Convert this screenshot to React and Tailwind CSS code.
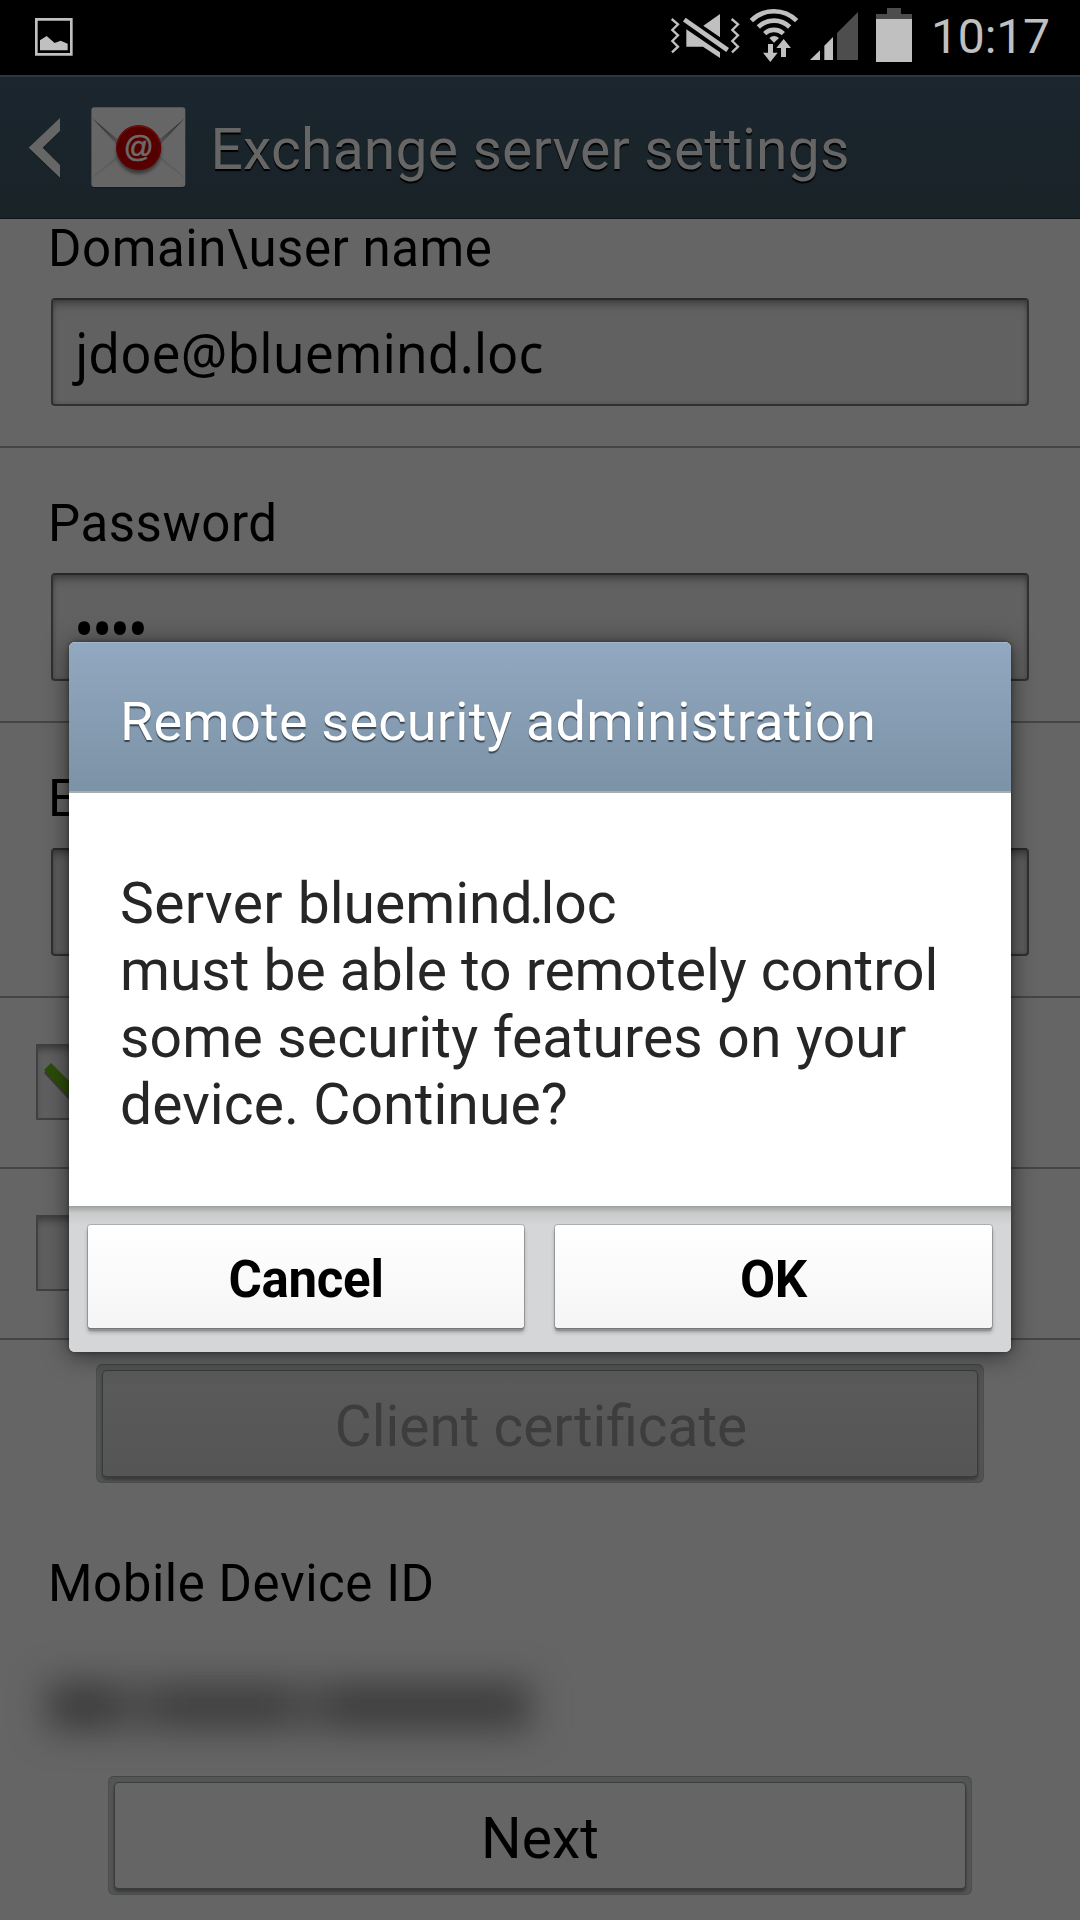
const ICON = "#c0c0c0";

function PictureIcon() {
  return (
    <svg width="38" height="38" viewBox="0 0 114 114" className="shrink-0">
      <path d="M0 0H113V113H0Z M8 8V105H105V8Z" fill={ICON} fillRule="evenodd" />
      <path d="M15 67L35 54L59 75L77 68L98 77V97H15Z" fill={ICON} />
    </svg>
  );
}

function MuteIcon() {
  return (
    <svg width="70" height="75" viewBox="90 0 210 225" className="shrink-0">
      <g fill={ICON}>
        <path d="M190 77L240 42V112Z" />
        <path d="M139 88L240 157V174L189 140H139Z" />
      </g>
      <g fill="none" stroke={ICON}>
        <path d="M133 59L263 150" strokeWidth="14" />
        <path d="M95 57L114 73L97 90L114 106L97 123L114 140L96 157" strokeWidth="7" />
        <path d="M275 57L294 73L277 90L294 106L277 123L294 140L276 157" strokeWidth="7" />
      </g>
    </svg>
  );
}

function WifiIcon() {
  return (
    <svg width="50" height="75" viewBox="327 0 150 225" className="shrink-0">
      <g fill="none" stroke={ICON} strokeWidth="14">
        <path d="M334 62A96 96 0 0 1 470 62" />
        <path d="M355 81A67 67 0 0 1 449 81" />
        <path d="M374 101A40 40 0 0 1 430 101" />
      </g>
      <path d="M388 114Q402 102 417 114L402 128Z" fill={ICON} />
      <path d="M384 132H399V158H413L391 186L369 158H384Z" fill={ICON} />
      <path d="M431 117L453 144H438V171H423V144H409Z" fill={ICON} />
    </svg>
  );
}

function SignalIcon() {
  return (
    <svg width="49" height="75" viewBox="510 0 147 225" className="shrink-0">
      <path d="M510 180L540 151V180Z" fill={ICON} />
      <path d="M553 180V137L579 111V180Z" fill={ICON} />
      <path d="M591 180V99L654 36V180Z" fill="#4d4d4d" />
    </svg>
  );
}

function BatteryIcon() {
  return (
    <svg width="36" height="75" viewBox="708 0 108 225" className="shrink-0">
      <path d="M708 57V42H741V24H783V42H816V57Z" fill="#4d4d4d" />
      <path d="M708 57H816V186H708Z" fill={ICON} />
    </svg>
  );
}

function StatusBar() {
  return (
    <div className="flex h-[75px] items-start bg-black pl-[35px] text-[#c0c0c0]">
      <div className="flex h-[74px] items-center">
        <PictureIcon />
      </div>
      <div className="ml-auto flex w-[410px] items-start">
        <MuteIcon />
        <div className="ml-[9px] flex">
          <WifiIcon />
        </div>
        <div className="ml-[11px] flex">
          <SignalIcon />
        </div>
        <div className="ml-[17px] flex">
          <BatteryIcon />
        </div>
        <span className="mt-2 ml-[19px] text-[48px] leading-[57px] tracking-[-0.14px]">10:17</span>
      </div>
    </div>
  );
}

function MailIcon() {
  return (
    <svg width="96" height="82" viewBox="272 320 288 246" className="ml-[30px] shrink-0">
      <defs>
        <linearGradient id="fold" x1="0" y1="0" x2="0" y2="1">
          <stop offset="0" stopColor="#2c2c2c" />
          <stop offset="1" stopColor="#5a5a5a" />
        </linearGradient>
        <filter id="soft" x="-20%" y="-20%" width="140%" height="140%">
          <feGaussianBlur stdDeviation="4" />
        </filter>
      </defs>
      <rect x="273" y="324" width="282" height="239" rx="9" fill="#141b20" />
      <rect x="273" y="321" width="282" height="239" rx="9" fill="#666" />
      <path d="M275 532L365 452V470Z M553 532L465 452V470Z" fill="#606060" />
      <path d="M275 532L362 462M553 532L468 462" stroke="#595959" strokeWidth="2" />
      <path d="M276 354L362 426L356 440Z M553 354L468 426L474 440Z" fill="url(#fold)" />
      <circle cx="415" cy="453" r="68" fill="#333" opacity="0.8" filter="url(#soft)" />
      <circle cx="415" cy="442" r="68" fill="#600000" />
      <circle cx="415" cy="442" r="63" fill="#540000" />
      <path d="M352 426A65 65 0 0 1 478 426" fill="none" stroke="#721212" strokeWidth="3" />
      <text x="415" y="469" textAnchor="middle" fontFamily="Liberation Sans" fontSize="88" stroke="#6b6b6b" strokeWidth="2" fill="#6b6b6b">
        @
      </text>
    </svg>
  );
}

function TitleBar() {
  return (
    <header className="flex h-[144px] items-center border-t-2 border-b border-t-[#2c363e] border-b-[#0e1317] bg-linear-to-b from-[#1c262f] to-[#182227] pl-[28px]">
      <svg width="33" height="62" viewBox="84 348 99 186" className="shrink-0">
        <path d="M86 443L180 354V393L128 443L180 495V533Z" fill="#10171b" />
        <path d="M86 440L180 351V390L128 440L180 492V530Z" fill="#666" />
      </svg>
      <MailIcon />
      <h1 className="mt-1 ml-[23.5px] text-[57px] leading-[67px] tracking-[0.2px] whitespace-nowrap text-[#666] [text-shadow:0_2px_1px_#000]">
        Exchange server settings
      </h1>
    </header>
  );
}

function Label({ children }) {
  return <div className="ml-[48px] text-[51px] leading-[59px] tracking-[0.55px] text-black">{children}</div>;
}

function Field({ label, first, children }) {
  return (
    <section className={first ? "border-b-2 border-[#454545] pb-10" : "border-b-2 border-[#454545] pt-[46px] pb-10"}>
      <Label>{label}</Label>
      <div className="mx-[51px] mt-5 flex h-[108px] rounded-[4px] border-2 border-[#303030] border-t-[#282828] bg-[#616161] pt-[15px] font-['Noto_Sans',sans-serif] text-[54px] leading-[74px] text-black shadow-[inset_0_7px_8px_-3px_rgba(0,0,0,0.35),inset_0_0_4px_rgba(0,0,0,0.2)]">
        {children}
      </div>
    </section>
  );
}

function CheckRow({ checked }) {
  return (
    <div className="h-[171px] border-b-2 border-[#454545] pt-[46px] pl-9">
      <div className="h-[76px] w-[76px] border-2 border-[#404040] bg-[#606060] shadow-[inset_0_6px_8px_-3px_rgba(0,0,0,0.4)]">
        {checked && (
          <svg width="72" height="72" viewBox="0 0 72 72">
            <path d="M6 27L14 19L33 39L60 5L68 12L33 56Z" fill="#222" opacity="0.6" />
            <path d="M6 24L13 17L33 37L60 3L68 10L33 53Z" fill="#2b4d08" />
          </svg>
        )}
      </div>
    </div>
  );
}

function WideButton({ disabled, children }) {
  return (
    <div
      className={
        disabled
          ? "mx-auto flex h-[119px] w-[888px] rounded-[6px] border border-[#4c4d4d] border-t-[#434545] bg-[#515453] p-[5px]"
          : "mx-auto flex h-[119px] w-[864px] rounded-[6px] border border-[#4c4d4d] border-t-[#434545] bg-[#535655] p-[5px]"
      }
    >
      <button
        className={
          disabled
            ? "flex h-[108px] flex-1 justify-center rounded-[5px] border border-b-2 border-[#3a3c3c] bg-linear-to-b from-[#5a5a5a] to-[#555] pt-[22px] pl-[2px] text-[56.8px] leading-[67px] text-[#3d3d3d] shadow-[0_2px_3px_#3a3a3a]"
            : "flex h-[108px] flex-1 justify-center rounded-[5px] border border-b-2 border-[#3a3c3c] bg-[#656565] pt-[22px] text-[57px] leading-[67px] text-black shadow-[0_2px_3px_#3a3a3a]"
        }
      >
        {children}
      </button>
    </div>
  );
}

function DialogButton({ children }) {
  return (
    <button className="flex h-[103px] justify-center rounded-[3px] bg-linear-to-b from-white to-[#f5f5f5] pt-[25px] text-[51px] leading-[59px] font-bold tracking-[-0.27px] text-black shadow-[0_0_0_1px_rgba(0,0,0,0.18),0_3px_1px_#8f908f,0_4px_4px_rgba(0,0,0,0.3)]">
      {children}
    </button>
  );
}

function Dialog() {
  return (
    <div
      role="dialog"
      className="absolute top-[642px] left-[69px] flex h-[710px] w-[942px] flex-col overflow-hidden rounded-[6px] bg-white shadow-[0_3px_24px_rgba(0,0,0,0.55),0_0_4px_rgba(0,0,0,0.4)]"
    >
      <div className="h-[151px] border-t border-b-2 border-t-[#a3b8cd] border-b-[#aaabae] bg-linear-to-b from-[#92a8c0] to-[#7c92a6] pt-[47px] pl-[51px] text-[54px] leading-[63px] tracking-[0.23px] text-white [text-shadow:0_2px_1px_rgba(30,40,50,0.75)]">
        Remote security administration
      </div>
      <div className="flex flex-1 flex-col pt-[77px] pl-[51px] text-[57px] leading-[67px] whitespace-nowrap text-[#262626]">
        <span>
          <span className="tracking-[0.4px]">Server </span>bluemin<span className="tracking-[-3.6px]">d.</span>loc
        </span>
        <span className="tracking-[-0.02px]">must be able to remotely control</span>
        <span className="tracking-[0.18px]">some security features on your</span>
        <span className="tracking-[0.08px]">device. Continue?</span>
      </div>
      <div className="grid h-[146px] grid-cols-[436px_437px] gap-[31px] bg-linear-to-b from-[#9da0a2] via-[#c9cbca] via-[7px] to-[#d4d6d8] to-[20px] pt-[19px] pl-[19px]">
        <DialogButton>Cancel</DialogButton>
        <DialogButton>OK</DialogButton>
      </div>
    </div>
  );
}

export default function App() {
  return (
    <div className="relative flex h-[1920px] w-[1080px] flex-col overflow-hidden bg-[#656565] font-[Roboto,sans-serif]">
      <StatusBar />
      <TitleBar />
      <main className="flex flex-col">
        <Field label="Domain\user name" first>
          <span className="ml-[22px] origin-left scale-x-[0.96]">jdoe@bluemind.loc</span>
        </Field>
        <Field label="Password">
          <span className="ml-[21px] tracking-[-2.4px]">••••</span>
        </Field>
        <Field label="Exchange server" />
        <CheckRow checked />
        <CheckRow />
        <div className="mt-6">
          <WideButton disabled>Client certificate</WideButton>
        </div>
        <div className="mt-[71px]">
          <Label>Mobile Device ID</Label>
        </div>
        <div className="mt-[70px] ml-[48px] flex h-[46px] w-[482px] blur-[18px]">
          <div className="w-[66px] bg-[#3a3a3a]" />
          <div className="w-[44px] bg-[#494949]" />
          <div className="w-[130px] bg-[#3e3e3e]" />
          <div className="w-[42px] bg-[#494949]" />
          <div className="flex-1 bg-[#3c3c3c]" />
        </div>
        <div className="mt-[47px]">
          <WideButton>Next</WideButton>
        </div>
      </main>
      <Dialog />
    </div>
  );
}
